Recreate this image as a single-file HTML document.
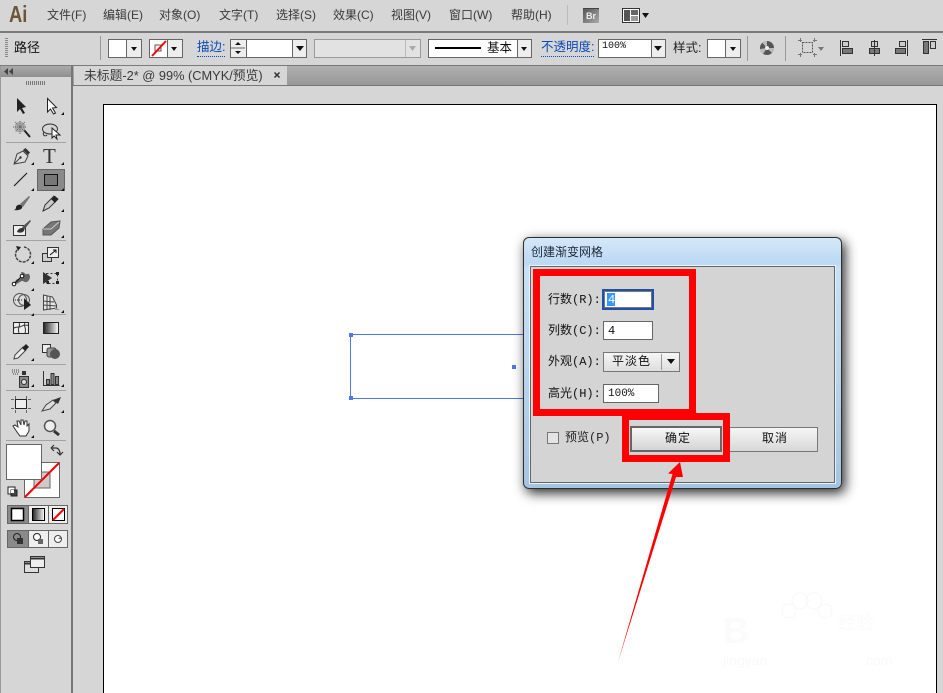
<!DOCTYPE html>
<html><head><meta charset="utf-8"><style>
html,body{margin:0;padding:0;background:#d6d6d6}
#r{position:relative;width:943px;height:693px;overflow:hidden;background:#d6d6d6;font-family:"Liberation Sans","Noto Sans CJK SC",sans-serif;color:#222}
.a{position:absolute}
.t{position:absolute;white-space:nowrap;line-height:16px}
.m{font-size:12px;color:#3a3a3a;top:7px}
.c{font-size:12.5px;color:#222;top:40px}
.l{color:#0b48b8;border-bottom:1px dotted #0b48b8;line-height:15px}
.d{position:absolute;white-space:nowrap;font-family:"Liberation Mono","Noto Sans CJK SC",monospace;font-size:12px;line-height:14px;color:#111}
.w{position:absolute;background:#fff;border:1px solid #666;box-sizing:border-box}
</style></head><body><div id="r">

<!-- menu -->
<div class="t" style="left:9px;top:3px;font-size:23px;font-weight:bold;color:#6d5538;line-height:22px;transform:scaleX(.8);transform-origin:0 0">Ai</div>
<div class="t m" style="left:47px">文件(F)</div>
<div class="t m" style="left:103px">编辑(E)</div>
<div class="t m" style="left:159px">对象(O)</div>
<div class="t m" style="left:219px">文字(T)</div>
<div class="t m" style="left:276px">选择(S)</div>
<div class="t m" style="left:333px">效果(C)</div>
<div class="t m" style="left:391px">视图(V)</div>
<div class="t m" style="left:449px">窗口(W)</div>
<div class="t m" style="left:511px">帮助(H)</div>
<div class="a" style="left:567px;top:5px;width:1px;height:20px;background:#bbb"></div>
<div class="a" style="left:583px;top:8px;width:16px;height:15px;background:linear-gradient(135deg,#555,#aaa);border-top:1px solid #444;box-sizing:border-box;color:#eee;font-size:9px;font-weight:bold;line-height:14px;text-align:center">Br</div>
<svg class="a" style="left:622px;top:8px" width="30" height="16"><rect x=".5" y=".5" width="17" height="14" fill="#fff" stroke="#333"/><rect x="2" y="2" width="6" height="11" fill="#555"/><rect x="9" y="2" width="7" height="5" fill="#666"/><rect x="9" y="8" width="7" height="5" fill="#999"/><path d="M20 5h7l-3.500 5z" fill="#111"/></svg>

<div class="a" style="left:0;top:31px;width:943px;height:2px;background:#7a7a7a"></div>
<!-- control bar -->
<div class="a" style="left:5px;top:38px;width:3px;height:20px;background:repeating-linear-gradient(#888 0 1px,#d6d6d6 1px 2px)"></div>
<div class="t" style="left:14px;top:40px;font-size:13px;color:#111">路径</div>
<div class="a" style="left:100px;top:36px;width:1px;height:24px;background:#999"></div>

<div class="w" style="left:108px;top:39px;width:34px;height:19px;background:linear-gradient(90deg,#fff 17px,#666 17px,#666 18px,#eee 18px)"></div>
<svg class="a" style="left:130px;top:46px" width="8" height="6"><path d="M1 1h6l-3 4z" fill="#111"/></svg>
<div class="w" style="left:149px;top:39px;width:34px;height:19px;background:linear-gradient(90deg,#fff 17px,#666 17px,#666 18px,#eee 18px)"></div>
<svg class="a" style="left:150px;top:40px" width="32" height="17"><rect x="5" y="5" width="6" height="6" fill="none" stroke="#555"/><path d="M2 16L16 1" stroke="#f00" stroke-width="2"/><path d="M21 7h6l-3 4z" fill="#111"/></svg>
<div class="t c l" style="left:197px;top:40px;height:16px">描边:</div>
<div class="w" style="left:230px;top:39px;width:77px;height:19px;background:linear-gradient(90deg,#eee 15px,#666 15px,#666 16px,#fff 16px,#fff 61px,#666 61px,#666 62px,#eee 62px)"></div>
<svg class="a" style="left:231px;top:40px" width="75" height="17"><path d="M0 8h14" stroke="#666"/><path d="M4 5l3-3 3 3z M4 11l3 3 3-3z" fill="#111"/><path d="M65 6h8l-4 5z" fill="#111"/></svg>
<div class="a" style="left:314px;top:39px;width:107px;height:19px;box-sizing:border-box;border:1px solid #999;background:linear-gradient(90deg,#e2e2e2 90px,#bbb 90px,#bbb 91px,#e2e2e2 91px)"></div>
<svg class="a" style="left:408px;top:45px" width="10" height="8"><path d="M1 1h7l-3.500 5z" fill="#aaa"/></svg>
<div class="w" style="left:428px;top:39px;width:104px;height:19px;background:linear-gradient(90deg,#fff 88px,#666 88px,#666 89px,#eee 89px)"></div>
<div class="a" style="left:435px;top:47px;width:46px;height:2px;background:#000"></div>
<div class="t c" style="left:487px;color:#111">基本</div>
<svg class="a" style="left:520px;top:45px" width="10" height="8"><path d="M1 2h6l-3 4z" fill="#111"/></svg>
<div class="t c l" style="left:541px;top:40px;height:16px">不透明度:</div>
<div class="w" style="left:598px;top:39px;width:68px;height:19px;background:linear-gradient(90deg,#fff 52px,#666 52px,#666 53px,#eee 53px)"></div>
<div class="t" style="left:602px;top:39px;font-family:'Liberation Mono',monospace;font-size:10px;color:#111">100%</div>
<svg class="a" style="left:653px;top:45px" width="11" height="8"><path d="M1 1h8l-4 5z" fill="#111"/></svg>
<div class="t c" style="left:673px">样式:</div>
<div class="w" style="left:707px;top:39px;width:34px;height:19px;background:linear-gradient(90deg,#fff 17px,#666 17px,#666 18px,#eee 18px)"></div>
<svg class="a" style="left:729px;top:45px" width="9" height="8"><path d="M1 2h6l-3 4z" fill="#111"/></svg>
<div class="a" style="left:747px;top:36px;width:1px;height:25px;background:#999"></div>
<svg class="a" style="left:759px;top:40px" width="16" height="16"><circle cx="8" cy="8" r="7" fill="#555"/><path d="M8 8L3 2.500A7 7 0 0 1 8 1z M8 8L15 8A7 7 0 0 1 13 13z M8 8L4 14A7 7 0 0 1 1 9z" fill="#bbb"/><circle cx="8" cy="8" r="2" fill="#eee"/></svg>
<div class="a" style="left:785px;top:36px;width:1px;height:25px;background:#999"></div>
<svg class="a" style="left:798px;top:38px" width="26" height="20"><rect x="4.500" y="4.500" width="10" height="10" fill="none" stroke="#555" stroke-dasharray="2 1"/><path d="M0 2.500h4M15 2.500h4M0 16.500h4M15 16.500h4M2.500 0v4M16.500 0v4M2.500 15v4M16.500 15v4" stroke="#777"/><path d="M20 9h6l-3 4z" fill="#777"/></svg>
<svg class="a" style="left:838px;top:38px" width="100" height="20"><g fill="#777" stroke="#333"><rect x="4.500" y="3.500" width="6" height="5" fill="#ccc"/><rect x="4.500" y="10.500" width="10" height="5"/><rect x="33.500" y="3.500" width="6" height="5" fill="#ccc"/><rect x="31.500" y="10.500" width="10" height="5"/><rect x="61.500" y="3.500" width="6" height="5" fill="#ccc"/><rect x="57.500" y="10.500" width="10" height="5"/><rect x="85.500" y="3.500" width="5" height="12"/><rect x="92.500" y="3.500" width="5" height="7" fill="#ccc"/></g><path d="M2.500 2v16M36.500 2v16M69.500 2v16M84 1.500h15" stroke="#333" fill="none"/></svg>
<div class="a" style="left:0;top:65px;width:943px;height:1px;background:#7a7a7a"></div>

<!-- panel + tab strip -->
<div class="a" style="left:1px;top:66px;width:70px;height:11px;background:linear-gradient(#aaa,#8f8f8f)"></div>
<svg class="a" style="left:4px;top:68px" width="10" height="8"><path d="M4 0v7L0 3.500zM9 0v7L5 3.500z" fill="#444"/></svg>
<div class="a" style="left:26px;top:81px;width:19px;height:4px;background:repeating-linear-gradient(90deg,#777 0 1px,#d6d6d6 1px 2px)"></div>
<div class="a" style="left:71px;top:66px;width:2px;height:627px;background:#777"></div>
<div class="a" style="left:0;top:66px;width:1px;height:627px;background:#999"></div>
<div class="a" style="left:73px;top:66px;width:870px;height:19px;background:linear-gradient(#b0b0b0,#989898)"></div>
<div class="a" style="left:74px;top:66px;width:213px;height:19px;background:#d6d6d6"></div>
<div class="a" style="left:73px;top:85px;width:870px;height:1px;background:#777"></div>
<div class="t" style="left:84px;top:68px;font-size:12.800px;color:#3a3a3a">未标题-2* @ 99% (CMYK/预览)</div>
<svg class="a" style="left:273px;top:71px" width="9" height="9"><path d="M1.500 1.500l5 5M6.500 1.500l-5 5" stroke="#333" stroke-width="1.500"/></svg>

<!-- canvas -->
<div class="a" style="left:103px;top:104px;width:834px;height:600px;box-sizing:border-box;background:#fff;border:1px solid #000"></div>
<div class="a" style="left:350px;top:334px;width:190px;height:65px;box-sizing:border-box;border:1px solid #4d78ee"></div>
<div class="a" style="left:349px;top:333px;width:4px;height:4px;background:#4d78ee"></div>
<div class="a" style="left:349px;top:396px;width:4px;height:4px;background:#4d78ee"></div>
<div class="a" style="left:512px;top:365px;width:4px;height:4px;background:#4d78ee"></div>

<!-- watermark -->
<svg class="a" style="left:775px;top:585px" width="70" height="40"><g fill="none" stroke="#f8f8f8"><circle cx="25" cy="16" r="8"/><circle cx="39" cy="16" r="8"/><circle cx="14" cy="26" r="7"/><circle cx="50" cy="26" r="7"/></g></svg>
<div class="t" style="left:723px;top:612px;font-size:36px;line-height:38px;color:#fbfbfb;font-weight:bold">B</div>
<div class="t" style="left:838px;top:615px;font-size:18px;color:#fbfbfb">经验</div>
<div class="t" style="left:723px;top:652px;font-size:14px;color:#f9f9f9">jingyan</div>
<div class="t" style="left:862px;top:652px;font-size:14px;color:#f9f9f9">.com</div>

<!-- tools -->
<svg class="a" style="left:0;top:0" width="72" height="600" viewBox="0 0 72 600">
<g stroke="#a3a3a3"><path d="M6 142.500h60M6 240.500h60M6 314.500h60M6 364.500h60M6 390.500h60M6 440.500h60"/></g>
<rect x="37.500" y="169.500" width="27" height="21" fill="#8a8a8a" stroke="#666"/>
<rect x="44.500" y="174.500" width="13" height="11" fill="#777" stroke="#111"/>
<!-- corner markers -->
<path d="M64 112v3h-3zM34 162v3h-3zM64 162v3h-3zM34 188v3h-3zM64 188v3h-3zM64 209v3h-3zM64 235v3h-3zM34 261v3h-3zM64 261v3h-3zM34 288v3h-3zM34 313v3h-3zM64 310v3h-3zM34 358v3h-3zM34 384v3h-3zM64 384v3h-3zM64 410v3h-3zM34 435v3h-3z" fill="#111"/>
<!-- select -->
<path d="M17 98l9 9-4 1 3 5-2 1-3-5-3 3z" fill="#222"/>
<path d="M47.500 98.500l9 9-4 .5 3 5-2 1-3-5-3 3z" fill="#fff" stroke="#222"/>
<!-- wand -->
<path d="M24 130l6 7" stroke="#222" stroke-width="2"/><circle cx="20" cy="127" r="5.500" fill="#aaa"/><path d="M13 127h14M20 121v13M15 122l10 10M25 122l-10 10" stroke="#666" stroke-dasharray="1 1"/>
<!-- lasso -->
<ellipse cx="50" cy="129" rx="7.500" ry="5" fill="none" stroke="#333"/><path d="M44 132c-2 3 1 5 3 3" fill="none" stroke="#333"/><path d="M52 128l8 7-4 0 1 4-3-3-2 2z" fill="#fff" stroke="#222"/>
<!-- pen -->
<path d="M14 164l3-10 6-3 5 5-3 6z" fill="#ddd" stroke="#444"/><path d="M14 164l6-6" stroke="#444"/><circle cx="20.500" cy="157.500" r="1.200" fill="#333"/><path d="M23 150l2.500-2 4.500 4.500-2 2.500z" fill="#333"/>
<!-- line -->
<path d="M14 186l13-13" stroke="#222" stroke-width="1.200"/>
<!-- brush -->
<path d="M20 204l9-8 1 1-7 10z" fill="#777"/><path d="M13 210c2 0 3-1 3-3 1-3 5-3 6-1s-1 5-9 4z" fill="#222"/>
<!-- pencil -->
<path d="M43 211l2-6 9-9 4 3-9 9z" fill="#ccc" stroke="#333"/><path d="M51 199l4-3 3 3-3 4z" fill="#222"/>
<!-- blob -->
<path d="M13.500 225.500h12l0 10h-12z" fill="#eee" stroke="#333"/><path d="M22 227l8-7 1 1-7 9z" fill="#555"/><path d="M17 232c1-4 6-5 7-3s-2 5-7 3z" fill="#333"/>
<!-- eraser -->
<path d="M43 229l8-7 9-1-1 7-8 7h-8z" fill="#777" stroke="#555"/><path d="M43 229h8l8-7" stroke="#ccc" fill="none"/>
<!-- rotate -->
<path d="M17 250a7.500 7.500 0 1 0 7-3" fill="none" stroke="#444" stroke-width="1.500" stroke-dasharray="3 1"/><path d="M16 246l5 1-3 4z" fill="#222"/>
<!-- scale -->
<rect x="42.500" y="253.500" width="9" height="8" fill="#ccc" stroke="#333"/><rect x="47.500" y="247.500" width="11" height="10" fill="#eee" stroke="#333"/><path d="M50 255l6-5M53 250h3v3" stroke="#111" fill="none"/>
<!-- warp -->
<path d="M15 282c2-5 5-2 7-5s-3-5 0-5 3 3 5 2 3 1 3 3-2 6-5 5-2-2-5 0-5 3-5 0z" fill="#666"/><path d="M14 284l8-8" stroke="#111"/><circle cx="14" cy="284" r="1.800" fill="#fff" stroke="#111"/><circle cx="22" cy="276" r="1.800" fill="#fff" stroke="#111"/>
<!-- free transform -->
<rect x="46.500" y="273.500" width="11" height="10" fill="none" stroke="#333" stroke-dasharray="2 2"/><path d="M43 272l9 6-9 6z" fill="#333"/><path d="M56 272h3v3h-3zM56 281h3v3h-3zM47 281h2v3h-2z" fill="#222"/>
<!-- shape builder -->
<circle cx="20" cy="300" r="6.500" fill="#ddd" stroke="#555"/><circle cx="24" cy="300" r="5.500" fill="none" stroke="#555"/><path d="M13 300h9" stroke="#222" stroke-dasharray="1 1"/><path d="M24 298l7 7-7 5z" fill="#222"/>
<!-- perspective -->
<path d="M43.500 310v-15l9 2 4 8v3z" fill="#e6e6e6" stroke="#444"/><path d="M47 296v14M50 296v14M43 301l11 1M43 305l14 1" stroke="#444"/><path d="M55 307l5 3h-5z" fill="#999"/>
<!-- mesh -->
<rect x="13.500" y="322.500" width="15" height="11" fill="#eee" stroke="#222"/><path d="M14 328c4-2 5 0 8-2s4 0 6-1M19 323c2 3-2 4 0 10M25 323c-2 3 2 5 0 10" stroke="#333" fill="none"/>
<!-- gradient -->
<defs><linearGradient id="g"><stop offset="0" stop-color="#222"/><stop offset="1" stop-color="#fff"/></linearGradient></defs>
<rect x="43.500" y="322.500" width="15" height="11" fill="url(#g)" stroke="#222"/>
<!-- dropper -->
<path d="M14 359l1-4 8-8 3 3-8 8z" fill="#eee" stroke="#444"/><path d="M22 348l4-4 3 3-4 4z" fill="#222"/>
<!-- blend -->
<rect x="42.500" y="344.500" width="8" height="8" fill="#eee" stroke="#333"/><rect x="47" y="348" width="9" height="9" rx="2" fill="#999" stroke="#444"/><circle cx="55" cy="354" r="5" fill="#555"/>
<!-- spray -->
<rect x="19.500" y="376.500" width="9" height="11" fill="#888" stroke="#333"/><rect x="22" y="371" width="4" height="4" fill="#333"/><circle cx="24" cy="382" r="2.500" fill="#ddd" stroke="#333"/><path d="M12 372h7M13 374h5M12 370h7" stroke="#444" stroke-dasharray="1 1"/>
<!-- graph -->
<path d="M43.500 371v14.500h16" fill="none" stroke="#333"/><rect x="46.500" y="379.500" width="3" height="5" fill="#888" stroke="#333"/><rect x="51" y="373.500" width="3" height="11" fill="#888" stroke="#333"/><rect x="55.500" y="376.500" width="3" height="8" fill="#888" stroke="#333"/>
<!-- artboard -->
<rect x="15.500" y="399.500" width="11" height="9" fill="#eee" stroke="#222"/><path d="M11 399.500h3M28 399.500h3M11 408.500h3M28 408.500h3M15.500 396v3M26.500 396v3M15.500 410v3M26.500 410v3" stroke="#666"/>
<!-- slice -->
<path d="M42 411l4-6 7-5 3 3-6 6z" fill="#ddd" stroke="#444"/><path d="M53 400l8-3-3 7z" fill="#333"/>
<!-- hand -->
<path d="M17 432l-4-6 2-1 3 2-1-6 2 0 2 4v-5h2l1 5 1-4h2l0 5 2-2 0 7-3 5h-6z" fill="#fff" stroke="#333"/>
<!-- zoom -->
<circle cx="50" cy="426" r="5.500" fill="#eee" stroke="#555" stroke-width="1.500"/><path d="M54 431l5 4" stroke="#333" stroke-width="3"/>

<!-- fill/stroke -->
<path d="M51 448l3-3M51 448l3 3M52 448h4c2 0 4 2 4 6M57 452l3 3 3-3" fill="none" stroke="#333" stroke-width="1.200"/>
<rect x="24.500" y="462.500" width="35" height="35" fill="#fff" stroke="#666"/>
<rect x="34" y="472" width="16" height="16" fill="#ccc" stroke="#666"/>
<path d="M25 497L59 463" stroke="#f00" stroke-width="2"/>
<rect x="6.500" y="444.500" width="35" height="35" fill="#fff" stroke="#666"/>
<rect x="8" y="487" width="7" height="7" fill="#fff" stroke="#222"/><rect x="11" y="490" width="6" height="6" fill="#444" stroke="#222"/><rect x="11" y="490" width="3" height="3" fill="#fff"/>
<!-- modes -->
<rect x="7.500" y="505.500" width="60" height="18" fill="#eee" stroke="#666"/>
<rect x="8" y="506" width="20" height="17" fill="#8a8a8a"/><path d="M28.500 505v19M48.500 505v19" stroke="#666"/>
<rect x="11.500" y="508.500" width="12" height="12" fill="#fff" stroke="#000" stroke-width="1.500"/>
<rect x="32.500" y="508.500" width="12" height="12" fill="url(#g)" stroke="#000"/>
<rect x="52.500" y="508.500" width="12" height="12" fill="#fff" stroke="#000"/><path d="M53 520l11-11" stroke="#f00" stroke-width="2"/>
<rect x="7.500" y="530.500" width="60" height="17" fill="#eee" stroke="#666"/>
<rect x="8" y="531" width="20" height="16" fill="#8a8a8a"/><path d="M28.500 530v18M48.500 530v18" stroke="#666"/>
<circle cx="17" cy="537" r="3.500" fill="none" stroke="#222"/><rect x="17" y="538" width="6" height="6" fill="#333"/>
<circle cx="37" cy="537" r="3.500" fill="#fff" stroke="#222"/><rect x="38" y="539" width="5" height="5" fill="#666"/>
<circle cx="58" cy="539" r="3.500" fill="#fff" stroke="#444"/><path d="M58 539h3v-3z" fill="#777"/>
<!-- screen mode -->
<rect x="24.500" y="561.500" width="14" height="11" fill="#ddd" stroke="#333"/><path d="M25 563.500h13" stroke="#333" stroke-width="2"/>
<rect x="30.500" y="556.500" width="14" height="11" fill="#eee" stroke="#333"/><path d="M31 558.500h13" stroke="#333" stroke-width="2"/>
</svg>
<div class="t" style="left:43px;top:147px;font-family:'Liberation Serif',serif;font-size:21px;line-height:19px;color:#333">T</div>

<!-- dialog -->
<div class="a" style="left:523px;top:237px;width:319px;height:252px;box-sizing:border-box;border:1px solid #2e2e2e;border-radius:6px;background:linear-gradient(#d6e8f8 0,#bcd8f4 25px,#c9e0f6 30px,#bcd6ee 50%,#a5c4e2 100%);box-shadow:3px 4px 12px rgba(0,0,0,.85)"></div>
<div class="t" style="left:531px;top:244px;font-size:12px;color:#1c2a38">创建渐变网格</div>
<div class="a" style="left:530px;top:266px;width:305px;height:217px;box-sizing:border-box;background:#d4d4d4;border:1px solid #666;box-shadow:0 0 0 1px #e8f2fb"></div>

<div class="d" style="left:548px;top:293px">行数(R):</div>
<div class="a" style="left:602px;top:289px;width:52px;height:21px;box-sizing:border-box;border:2px solid #2050a8;background:#fff;box-shadow:inset 0 0 0 1px #777"></div>
<div class="a" style="left:607px;top:293px;width:8px;height:13px;background:#3399ff"></div>
<div class="d" style="left:608px;top:293px;color:#fff">4</div>
<div class="d" style="left:548px;top:324px">列数(C):</div>
<div class="w" style="left:603px;top:321px;width:50px;height:19px"></div>
<div class="d" style="left:608px;top:324px">4</div>
<div class="d" style="left:548px;top:355px">外观(A):</div>
<div class="a" style="left:603px;top:352px;width:77px;height:20px;box-sizing:border-box;border:1px solid #777;background:linear-gradient(#f6f6f6,#dedede)"></div>
<div class="a" style="left:661px;top:354px;width:1px;height:16px;background:#999"></div>
<svg class="a" style="left:666px;top:358px" width="10" height="8"><path d="M1 1h8l-4 5z" fill="#111"/></svg>
<div class="d" style="left:612px;top:355px;letter-spacing:1px">平淡色</div>
<div class="d" style="left:548px;top:387px">高光(H):</div>
<div class="w" style="left:603px;top:384px;width:56px;height:19px"></div>
<div class="d" style="left:608px;top:387px;font-size:11px">100%</div>

<div class="a" style="left:547px;top:432px;width:12px;height:12px;box-sizing:border-box;border:1px solid #777;background:#e4e4e4"></div>
<div class="d" style="left:565px;top:431px;color:#222">预览(P)</div>
<div class="a" style="left:730px;top:427px;width:88px;height:25px;box-sizing:border-box;border:1px solid #777;border-left:0;background:linear-gradient(#f6f6f6,#d8d8d8)"></div>
<div class="d" style="left:762px;top:432px;letter-spacing:1px">取消</div>

<!-- annotations -->
<div class="a" style="left:533px;top:269px;width:163px;height:147px;box-sizing:border-box;border:7px solid #f00"></div>
<div class="a" style="left:622px;top:413px;width:108px;height:49px;box-sizing:border-box;border:7px solid #f00"></div>
<div class="a" style="left:630px;top:426px;width:92px;height:26px;box-sizing:border-box;border:2px solid #666;background:linear-gradient(#f8f8f8,#d4d4d4)"></div>
<div class="d" style="left:665px;top:432px;letter-spacing:1px">确定</div>
<svg class="a" style="left:0;top:0" width="943" height="693"><path d="M680 462L668 473.500 672.500 474 618 662 676 477 683 477z" fill="#f00"/></svg>

</div></body></html>
